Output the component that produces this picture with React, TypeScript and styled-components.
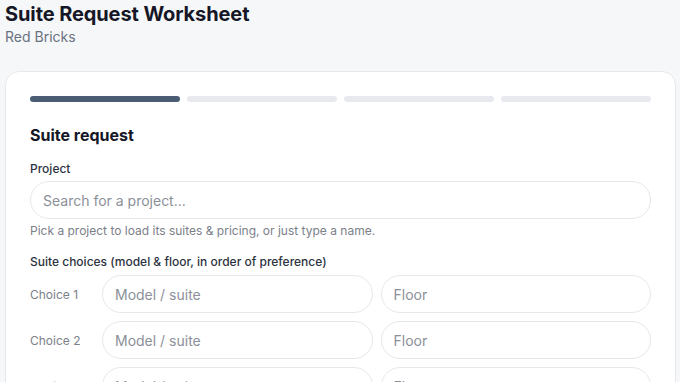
import styled, {createGlobalStyle} from "styled-components";

const GlobalStyle = createGlobalStyle`
  * {
    box-sizing: border-box;
  }
  body {
    margin: 0;
    background: #f6f7f9;
    font-family: Inter, "Noto Sans", sans-serif;
    color: #111827;
  }
`;

const steps = [true, false, false, false];
const choices = [1, 2, 3];

export default function App() {
    return (
        <Page>
            <GlobalStyle/>
            <Header>
                <Title>Suite Request Worksheet</Title>
                <Subtitle>Red Bricks</Subtitle>
            </Header>
            <Card>
                <Progress>
                    {steps.map((active, i) => (
                        <Step key={i} $active={active}/>
                    ))}
                </Progress>
                <SectionTitle>Suite request</SectionTitle>
                <Field>
                    <Label>Project</Label>
                    <Input placeholder="Search for a project..."/>
                    <Hint>Pick a project to load its suites &amp; pricing, or just type a name.</Hint>
                </Field>
                <Field>
                    <Label $gap={5}>Suite choices (model &amp; floor, in order of preference)</Label>
                    <Choices>
                        {choices.map((n) => (
                            <ChoiceRow key={n}>
                                <ChoiceLabel>Choice {n}</ChoiceLabel>
                                <Input placeholder="Model / suite"/>
                                <Input placeholder="Floor"/>
                            </ChoiceRow>
                        ))}
                    </Choices>
                </Field>
            </Card>
        </Page>
    );
}

const Page = styled.div`
  padding: 1px 4px 40px 5px;
`;

const Header = styled.div`
  display: flex;
  flex-direction: column;
  margin-bottom: 25px;
`;

const Title = styled.h1`
  margin: 0;
  font-size: 20px;
  font-weight: 700;
  line-height: 27px;
  color: #151726;
  letter-spacing: -0.1px;
`;

const Subtitle = styled.div`
  font-size: 14px;
  line-height: 18px;
  color: #6b7280;
`;

const Card = styled.div`
  background: #fff;
  border: 1px solid #e6e8ec;
  border-radius: 14px;
  padding: 24px;
`;

const Progress = styled.div`
  display: flex;
  gap: 7px;
  margin-bottom: 22px;
`;

const Step = styled.div<{ $active: boolean }>`
  flex: 1;
  height: 6px;
  border-radius: 3px;
  background: ${(p) => (p.$active ? "#4a5d75" : "#e8e9ee")};
`;

const SectionTitle = styled.h2`
  margin: 0 0 15px;
  font-size: 16px;
  font-weight: 700;
  line-height: 22px;
  color: #151726;
`;

const Field = styled.div`
  display: flex;
  flex-direction: column;
  margin-bottom: 15px;
`;

const Label = styled.label<{ $gap?: number }>`
  font-size: 12px;
  font-weight: 500;
  line-height: 16px;
  color: #2d3340;
  margin-bottom: ${(p) => p.$gap ?? 4}px;
`;

const Input = styled.input`
  width: 100%;
  min-width: 0;
  height: 38px;
  border: 1px solid #e6e8ec;
  border-radius: 19px;
  padding: 0 12px;
  font-family: inherit;
  font-size: 14px;
  color: #111827;
  background: #fff;
  outline: none;

  &::placeholder {
    color: #8b9099;
  }
`;

const Hint = styled.div`
  margin-top: 4px;
  font-size: 12px;
  line-height: 16px;
  color: #7b8089;
`;

const Choices = styled.div`
  display: flex;
  flex-direction: column;
  gap: 8px;
`;

const ChoiceRow = styled.div`
  display: grid;
  grid-template-columns: 64px 1fr 1fr;
  gap: 8px;
  align-items: center;
`;

const ChoiceLabel = styled.span`
  font-size: 12px;
  color: #7b8089;
`;
